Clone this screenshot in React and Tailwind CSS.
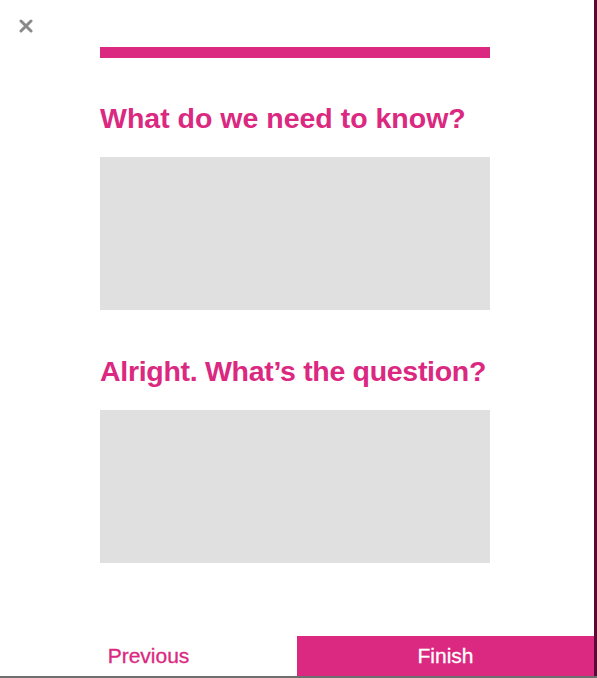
import React from 'react';

export default function App() {
  return (
    <div className="w-[597px] h-[678px] flex flex-col font-['Liberation_Sans',Arial,sans-serif]">
      <div className="flex-1 flex bg-[#5a0a33]">
        <div className="w-[594px] bg-white flex flex-col">
          {/* close */}
          <div className="h-[47px] relative">
            <svg className="absolute left-[19px] top-[19px]" width="14" height="14" viewBox="0 0 14 14">
              <path d="M2 2 L12 12 M12 2 L2 12" stroke="#8a8a8a" strokeWidth="3" strokeLinecap="round" />
            </svg>
          </div>

          <div className="ml-[100px] w-[390px]">
            <div className="h-[11px] bg-[#db2880]" />
            <h2 className="mt-[42px] text-[28.5px] leading-[36px] font-bold text-[#db2880] whitespace-nowrap">What do we need to know?</h2>
            <div className="mt-[21px] h-[153px] bg-[#e0e0e0]" />
            <h2 className="mt-[43px] text-[28.5px] leading-[36px] font-bold text-[#db2880] whitespace-nowrap tracking-[-0.3px]">Alright. What’s the question?</h2>
            <div className="mt-[21px] h-[153px] bg-[#e0e0e0]" />
          </div>

          <div className="mt-auto flex h-[40px]">
            <button className="flex-1 flex items-center justify-center text-[21px] text-[#db2880] [-webkit-text-stroke:0.3px_#db2880]">Previous</button>
            <button className="flex-1 flex items-center justify-center text-[21px] text-white bg-[#db2880] [-webkit-text-stroke:0.3px_white]">Finish</button>
          </div>
        </div>
      </div>
      <div className="h-[2px] bg-[#6e6e6e]" />
    </div>
  );
}
